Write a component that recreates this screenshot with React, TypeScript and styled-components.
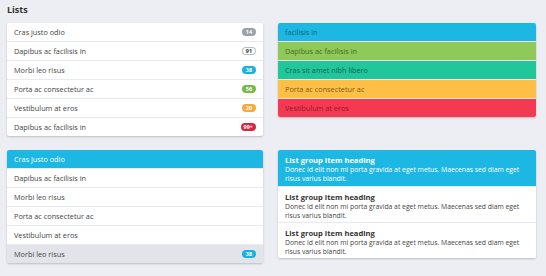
import * as React from "react"
import styled, { createGlobalStyle, css } from "styled-components"

const GlobalStyle = createGlobalStyle`
  html, body {
    margin: 0;
    padding: 0;
    background: #edeef3;
  }
  body {
    font-family: "Open Sans", "Liberation Sans", sans-serif;
    color: #444;
  }
`

type Tone = "blue" | "green" | "teal" | "yellow" | "red" | "grey" | "outline"

const badgeColors: Record<Tone, string> = {
  grey: "#9aa0aa",
  outline: "#ffffff",
  blue: "#1ab1de",
  green: "#7ab84a",
  yellow: "#f8a836",
  red: "#d9243f",
  teal: "#21c69a",
}

const rowTones: Record<string, { bg: string; fg: string }> = {
  blue: { bg: "#1cb7e3", fg: "#155f78" },
  green: { bg: "#8fc95a", fg: "#466a26" },
  teal: { bg: "#22c69b", fg: "#0d6450" },
  yellow: { bg: "#fdbf46", fg: "#85591a" },
  red: { bg: "#f43a52", fg: "#8c1a29" },
}

const Page = styled.div`
  padding: 3px 10px 12px 7px;
`

const Title = styled.h4`
  margin: 0 0 7px;
  font-size: 9px;
  line-height: 13px;
  font-weight: 700;
  color: #333;
`

const Grid = styled.div`
  display: grid;
  grid-template-columns: 256px 258px;
  column-gap: 15px;
  row-gap: 14px;
  align-items: start;
`

const Group = styled.div`
  background: #fff;
  border-radius: 2px;
  box-shadow: 0 1px 2px rgba(40, 45, 60, 0.25);
  overflow: hidden;
`

const Row = styled.div<{ $tone?: string; $active?: boolean; $muted?: boolean }>`
  display: flex;
  align-items: center;
  justify-content: space-between;
  height: 18px;
  padding: 0 7px;
  font-size: 7.3px;
  color: #444;
  & + & {
    border-top: 1px solid #e9eaef;
  }
  ${(p) =>
    p.$tone &&
    css`
      background: ${rowTones[p.$tone].bg};
      color: ${rowTones[p.$tone].fg};
      & + & {
        border-top-color: ${rowTones[p.$tone].bg};
      }
    `}
  ${(p) =>
    p.$active &&
    css`
      background: #1cb7e3;
      color: #fff;
      & + & {
        border-top-color: #1cb7e3;
      }
    `}
  ${(p) =>
    p.$muted &&
    css`
      background: #e2e4e9;
    `}
`

const Badge = styled.span<{ $tone: Tone }>`
  display: inline-block;
  min-width: 8px;
  height: 8px;
  padding: 0 3px;
  border-radius: 5px;
  background: ${(p) => badgeColors[p.$tone]};
  color: ${(p) => (p.$tone === "outline" ? "#333" : "#fff")};
  box-shadow: ${(p) => (p.$tone === "outline" ? "inset 0 0 0 1px #b8bcc4" : "none")};
  font-size: 5.5px;
  font-weight: 700;
  line-height: 8px;
  text-align: center;
`

const Item = styled.div<{ $active?: boolean }>`
  padding: 5px 7px 3px;
  height: 36px;
  box-sizing: border-box;
  background: ${(p) => (p.$active ? "#1cb7e3" : "#fff")};
  color: ${(p) => (p.$active ? "#fff" : "#444")};
  & + & {
    border-top: 1px solid #e9eaef;
  }
`

const ItemHeading = styled.div<{ $active?: boolean }>`
  font-size: 7.6px;
  font-weight: 700;
  line-height: 10px;
  color: ${(p) => (p.$active ? "#fff" : "#333")};
`

const ItemText = styled.p`
  margin: 0;
  font-size: 6.8px;
  line-height: 9px;
`

const badgeRows: { label: string; count: string; tone: Tone }[] = [
  { label: "Cras justo odio", count: "14", tone: "grey" },
  { label: "Dapibus ac facilisis in", count: "91", tone: "outline" },
  { label: "Morbi leo risus", count: "38", tone: "blue" },
  { label: "Porta ac consectetur ac", count: "56", tone: "green" },
  { label: "Vestibulum at eros", count: "20", tone: "yellow" },
  { label: "Dapibus ac facilisis in", count: "99+", tone: "red" },
]

const toneRows = [
  { label: "facilisis in", tone: "blue" },
  { label: "Dapibus ac facilisis in", tone: "green" },
  { label: "Cras sit amet nibh libero", tone: "teal" },
  { label: "Porta ac consectetur ac", tone: "yellow" },
  { label: "Vestibulum at eros", tone: "red" },
]

const plainRows = [
  "Dapibus ac facilisis in",
  "Morbi leo risus",
  "Porta ac consectetur ac",
  "Vestibulum at eros",
]

const bodyText =
  "Donec id elit non mi porta gravida at eget metus. Maecenas sed diam eget risus varius blandit."

const App = () => {
  return (
    <Page>
      <GlobalStyle />
      <Title>Lists</Title>
      <Grid>
        <Group>
          {badgeRows.map((row, i) => (
            <Row key={i}>
              <span>{row.label}</span>
              <Badge $tone={row.tone}>{row.count}</Badge>
            </Row>
          ))}
        </Group>
        <Group>
          {toneRows.map((row) => (
            <Row key={row.label} $tone={row.tone}>
              <span>{row.label}</span>
            </Row>
          ))}
        </Group>
        <Group>
          <Row $active>
            <span>Cras justo odio</span>
          </Row>
          {plainRows.map((label) => (
            <Row key={label}>
              <span>{label}</span>
            </Row>
          ))}
          <Row $muted>
            <span>Morbi leo risus</span>
            <Badge $tone="blue">38</Badge>
          </Row>
        </Group>
        <Group>
          {[true, false, false].map((active, i) => (
            <Item key={i} $active={active}>
              <ItemHeading $active={active}>List group item heading</ItemHeading>
              <ItemText>{bodyText}</ItemText>
            </Item>
          ))}
        </Group>
      </Grid>
    </Page>
  )
}

export default App
